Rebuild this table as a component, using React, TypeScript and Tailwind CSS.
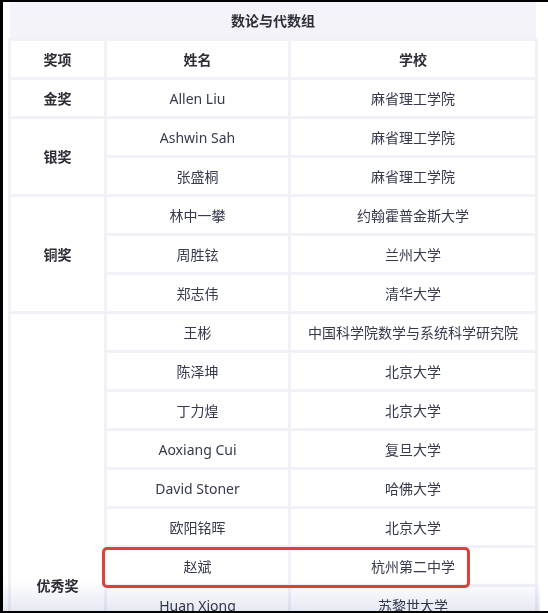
const rows: { award?: string; span?: number; name: string; school: string }[] = [
  { award: "金奖", span: 1, name: "Allen Liu", school: "麻省理工学院" },
  { award: "银奖", span: 2, name: "Ashwin Sah", school: "麻省理工学院" },
  { name: "张盛桐", school: "麻省理工学院" },
  { award: "铜奖", span: 3, name: "林中一攀", school: "约翰霍普金斯大学" },
  { name: "周胜铉", school: "兰州大学" },
  { name: "郑志伟", school: "清华大学" },
  { award: "优秀奖", span: 14, name: "王彬", school: "中国科学院数学与系统科学研究院" },
  { name: "陈泽坤", school: "北京大学" },
  { name: "丁力煌", school: "北京大学" },
  { name: "Aoxiang Cui", school: "复旦大学" },
  { name: "David Stoner", school: "哈佛大学" },
  { name: "欧阳铭晖", school: "北京大学" },
  { name: "赵斌", school: "杭州第二中学" },
  { name: "Huan Xiong", school: "苏黎世大学" },
  { name: "—", school: "—" },
  { name: "—", school: "—" },
  { name: "—", school: "—" },
  { name: "—", school: "—" },
  { name: "—", school: "—" },
  { name: "—", school: "—" },
];

const cell = "bg-white h-[36px] p-0 text-center align-middle";

export default function App() {
  return (
    <div
      className="relative h-[613px] w-[548px] overflow-hidden bg-white border-l-[3px] border-t-2 border-b-2 border-black text-[14px] text-[#363a4c]"
      style={{ fontFamily: '"Noto Sans", "Noto Sans CJK SC", sans-serif' }}
    >
      <div className="ml-[5px] w-[530px]">
        <div className="mx-[2px] flex h-[36px] items-center justify-center bg-[#f3f3f9] font-bold text-[#2e2e36]">
          数论与代数组
        </div>
        <table className="w-[530px] table-fixed border-separate border-spacing-[3px] bg-[#f1f1f8]">
          <colgroup>
            <col className="w-[93px]" />
            <col className="w-[181px]" />
            <col className="w-[244px]" />
          </colgroup>
          <thead>
            <tr>
              <th className={`${cell} font-bold text-[#2e2e36]`}>奖项</th>
              <th className={`${cell} font-bold text-[#2e2e36]`}>姓名</th>
              <th className={`${cell} font-bold text-[#2e2e36]`}>学校</th>
            </tr>
          </thead>
          <tbody>
            {rows.map((r, i) => (
              <tr key={i}>
                {r.award && (
                  <td rowSpan={r.span} className={`${cell} font-bold text-[#2e2e36]`}>
                    {r.award}
                  </td>
                )}
                <td className={cell}>{r.name}</td>
                <td className={cell}>{r.school}</td>
              </tr>
            ))}
          </tbody>
        </table>
      </div>

      {/* highlight annotation */}
      <div className="absolute left-[99px] top-[545px] h-[41px] w-[368px] rounded-[5px] border-[3px] border-[#d9433b]" />

      {/* bottom fade */}
      <div className="pointer-events-none absolute bottom-0 left-0 h-[30px] w-[537px] bg-gradient-to-b from-white to-[#e6e8f3] mix-blend-multiply" />
    </div>
  );
}
